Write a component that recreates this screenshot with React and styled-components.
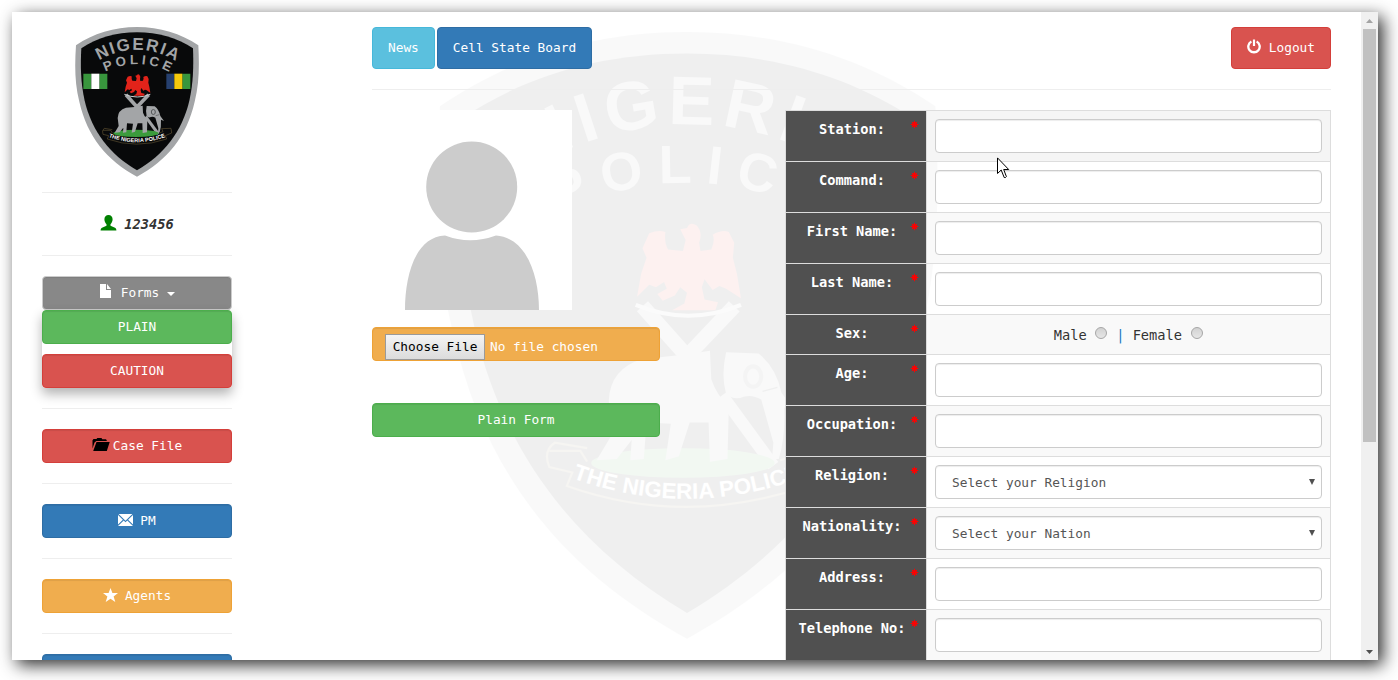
import React from "react";
import styled, { createGlobalStyle, css } from "styled-components";

const Global = createGlobalStyle`
  * { box-sizing: border-box; }
  body { margin: 0; background: #fff; overflow: hidden; }
`;

const tones = {
  green: ["#5cb85c", "#4cae4c"],
  red: ["#d9534f", "#d43f3a"],
  blue: ["#337ab7", "#2e6da4"],
  orange: ["#f0ad4e", "#eea236"],
  info: ["#5bc0de", "#46b8da"],
  grey: ["#888888", "#cccccc"],
};

const Page = styled.div`
  width: 1398px;
  height: 680px;
  padding: 12px 20px 20px 12px;
  overflow: hidden;
  font-family: "DejaVu Sans Mono", "Liberation Mono", monospace;
  font-size: 12.8px;
  line-height: 20px;
  color: #333;
`;

const Window = styled.div`
  position: relative;
  display: flex;
  width: 1366px;
  height: 648px;
  background: #fff;
  box-shadow: 5px 5px 16px rgba(0, 0, 0, 0.82);
`;

const Viewport = styled.div`
  position: relative;
  flex: 1;
  display: flex;
  align-items: flex-start;
  gap: 140px;
  height: 648px;
  padding: 15px 30px 0;
  overflow: hidden;
`;

const Watermark = styled.div`
  position: absolute;
  left: 424px;
  top: 20px;
  width: 502px;
  height: 608px;
  opacity: 0.06;
  svg { display: block; width: 100%; height: 100%; }
`;

const Sidebar = styled.aside`
  width: 190px;
  flex: none;
`;

const Logo = styled.div`
  height: 150px;
  margin-bottom: 15px;
  svg { display: block; width: 124px; height: 150px; margin: 0 auto; }
`;

const Rule = styled.hr`
  height: 1px;
  margin: ${(p) => (p.$flush ? "0" : "20px 0")};
  border: 0;
  background: #eee;
`;

const User = styled.div`
  display: flex;
  align-items: center;
  justify-content: center;
  gap: 7px;
  height: 62px;
  font-size: 13.7px;
  font-weight: bold;
  font-style: italic;
  svg { margin-top: -2px; }
`;

const Button = styled.button`
  display: flex;
  align-items: center;
  justify-content: center;
  gap: ${(p) => p.$gap ?? 8}px;
  width: ${(p) => (p.$auto ? "auto" : "100%")};
  height: ${(p) => (p.$tall ? 42 : 34)}px;
  padding: 0 ${(p) => (p.$auto ? 15 : 12)}px;
  border: 1px solid ${(p) => tones[p.$tone][1]};
  border-radius: 4px;
  background: ${(p) => tones[p.$tone][0]};
  color: #fff;
  font: inherit;
  white-space: nowrap;
  ${(p) => !p.$auto && css`box-shadow: inset 0 1px 1px rgba(0, 0, 0, 0.075);`}
  svg { display: block; flex: none; margin-top: -3px; }
`;

const Menu = styled.div`
  display: flex;
  flex-direction: column;
  gap: 10px;
  background: #fff;
  border-radius: 4px;
  box-shadow: 0 6px 12px rgba(0, 0, 0, 0.3);
`;

const Caret = styled.span`
  border: 4px solid transparent;
  border-top-color: #fff;
  border-bottom: 0;
  margin-top: 2px;
`;

const Stack = styled.div`
  padding-top: 20px;
`;

const Main = styled.main`
  position: relative;
  width: 959px;
  flex: none;
`;

const Nav = styled.nav`
  display: flex;
  gap: 2px;
  > :last-child { margin-left: auto; }
`;

const Columns = styled.div`
  display: flex;
  justify-content: space-between;
  align-items: flex-start;
`;

const Upload = styled.section`
  width: 288px;
`;

const Avatar = styled.div`
  width: 200px;
  height: 200px;
  margin-bottom: 17px;
  background: #fff;
  svg { display: block; }
`;

const FileField = styled.div`
  display: flex;
  align-items: flex-start;
  gap: 5px;
  height: 34px;
  margin-bottom: 42px;
  padding: 6px 12px;
  border: 1px solid ${tones.orange[1]};
  border-radius: 4px;
  background: ${tones.orange[0]};
  box-shadow: inset 0 1px 1px rgba(0, 0, 0, 0.075);
  color: #fff;
  line-height: 25px;
`;

const FileButton = styled.span`
  width: 100px;
  height: 26px;
  border: 1px solid #9a9a9a;
  background: linear-gradient(#f4f4f4, #dcdcdc);
  color: #000;
  text-align: center;
  line-height: 24px;
`;

const Form = styled.form`
  width: 546px;
  border: 1px solid #ddd;
`;

const Row = styled.div`
  display: flex;
  height: ${(p) => (p.$short ? 40 : 51)}px;
  border-bottom: 1px solid #ddd;
  background: ${(p) => p.$bg};
`;

const Label = styled.label`
  display: flex;
  width: 141px;
  padding: 8px 7px 8px 9px;
  border-right: 1px solid #ddd;
  background: #505050;
  color: #fff;
  font-size: 13.7px;
  font-weight: bold;
  white-space: nowrap;
  span { flex: 1; display: flex; justify-content: center; min-width: 0; }
  svg { flex: none; margin: 1px 0 0 1px; }
`;

const Cell = styled.div`
  flex: 1;
  display: flex;
  padding: 8px;
`;

const field = css`
  width: 100%;
  height: 34px;
  border: 1px solid #ccc;
  border-radius: 4px;
  background: #fff;
  box-shadow: inset 0 1px 1px rgba(0, 0, 0, 0.075);
`;

const Input = styled.input`
  ${field}
  padding: 6px 12px;
  font: inherit;
`;

const Select = styled.div`
  ${field}
  display: flex;
  align-items: center;
  justify-content: space-between;
  padding: 1px 6px 0 16px;
  color: #555;
  svg { display: block; margin-top: -2px; }
`;

const Choices = styled.div`
  flex: 1;
  display: flex;
  justify-content: center;
  align-items: center;
  gap: 8.25px;
  font-size: 13.7px;
`;

const Bar = styled.span`
  color: #1778c2;
`;

const Radio = styled.span`
  width: 12px;
  height: 12px;
  margin: -3px 0.5px 0;
  border: 1px solid #a6a6a6;
  border-radius: 50%;
  background: linear-gradient(#d2d2d2, #e6e6e6);
`;

const Scrollbar = styled.div`
  display: flex;
  flex-direction: column;
  align-items: center;
  justify-content: space-between;
  width: 17px;
  background: #f0f0f0;
`;

const Arrow = styled.div`
  display: grid;
  place-items: center;
  height: 17px;
`;

const Thumb = styled.div`
  width: 13px;
  height: 413px;
  margin-bottom: auto;
  background: #c1c1c1;
`;

const Pointer = styled.svg`
  position: absolute;
  left: 985px;
  top: 145px;
`;

function Crest({ id }) {
  return (
    <svg viewBox="45 36 372 450" preserveAspectRatio="none" fontFamily='"Liberation Sans", Arial, sans-serif' fontWeight="bold">
      <defs>
        <path id={`${id}-top`} d="M105 145 A216 216 0 0 1 357 145" />
        <path id={`${id}-mid`} d="M120 179 A212 212 0 0 1 342 179" />
        <path id={`${id}-rib`} d="M140 364 Q230 399 322 364" />
      </defs>
      <path d="M231 36 C162 36 100 55 48 91 C44 150 44 205 58 260 C82 365 140 435 231 485 C322 435 380 365 404 260 C418 205 418 150 415 91 C362 55 300 36 231 36Z" fill="#a3a5a7" />
      <path d="M231 52 C168 52 112 68 64 100 C61 152 62 205 74 257 C96 350 150 418 231 466 C312 418 366 350 388 257 C400 205 401 152 399 100 C350 68 294 52 231 52Z" fill="#08090a" />
      <text fill="#a3a5a7" fontSize="51" letterSpacing="5" textAnchor="middle">
        <textPath href={`#${id}-top`} startOffset="51.5%">NIGERIA</textPath>
      </text>
      <text fill="#a3a5a7" fontSize="40" letterSpacing="10" textAnchor="middle">
        <textPath href={`#${id}-mid`} startOffset="52.5%">POLICE</textPath>
      </text>
      <path d="M70 176h24v46H70zM118 176h24v46h-24zM367 176h24v46h-24z" fill="#38963d" />
      <path d="M94 176h24v46H94z" fill="#fff" />
      <path d="M319 176h24v46h-24z" fill="#26406f" />
      <path d="M343 176h24v46h-24z" fill="#f5c90c" />
      <g fill="none" stroke="#a3a5a7" strokeWidth="11">
        <path d="M198 239 L231 276" />
        <path d="M266 239 L231 276" />
        <path d="M257 305 L295 357" strokeWidth="9" />
      </g>
      <path d="M193 238 Q232 254 271 238" fill="none" stroke="#c8cacb" strokeWidth="3" />
      <path d="M228 186 L226 182 L231 181 Q233 176 238 179 Q243 184 240 192 L241 198 L249 197 Q252 190 250 186 Q257 182 262 184 L266 192 L265 203 L268 215 L271 233 L266 230 L260 226 L255 224 L250 227 L244 219 L242 225 L244 234 L254 236 L252 242 L220 242 L229 237 L231 229 L226 225 L222 231 L213 235 L209 230 L216 226 L214 221 L208 225 L203 223 L194 232 L197 215 L201 203 L198 196 L203 185 Q210 182 215 184 Q214 192 217 197 L228 198 L230 190 Z" fill="#e2231a" />
      <ellipse cx="228" cy="355" rx="68" ry="11" fill="#3b9b3c" />
      <path d="M173 309 Q174 285 198 278 Q224 276 248 272 L249 293 Q253 305 262 313 L261 352 L248 354 L247 325 L233 325 L225 350 L215 353 L219 326 L201 325 L199 352 L189 353 L190 338 L179 352 L164 353 L176 333Z" fill="#a3a5a7" />
      <path d="M260 273 L284 274 Q297 284 301 303 L312 318 L303 314 Q304 336 299 352 L294 352 L295 340 L286 308 Q279 304 273 306 Q266 309 260 304 Q256 290 260 273Z" fill="#a3a5a7" />
      <ellipse cx="280" cy="291" rx="6" ry="7.500" fill="none" stroke="#55585a" strokeWidth="3" />
      <path d="M287 302 L298 299" fill="none" stroke="#08090a" strokeWidth="1" />
      <g fill="none" stroke="#72613a" strokeWidth="1.600">
        <path d="M157 344 L133 340 Q124 346 129 358 L146 362 L142 372 Q230 403 320 372 L316 362 L335 354 L333 340 L305 341 L309 350 L300 353" />
        <path d="M129 346 L152 346 L157 354" />
      </g>
      <text fill="#fff" fontSize="16.500" letterSpacing="0.100" textAnchor="middle">
        <textPath href={`#${id}-rib`} startOffset="50%">THE NIGERIA POLICE</textPath>
      </text>
    </svg>
  );
}

const PersonIcon = () => (
  <svg width="17" height="16" viewBox="0 0 17 16" fill="#008000">
    <path d="M8.5 0C6 0 4.400 1.700 4.400 4.300c0 2 .9 4 2.100 4.900v1.600L2 12.700C.9 13.300.6 14.400.6 15.500h15.800c0-1.100-.3-2.200-1.400-2.800l-4.500-1.900V9.200c1.200-.9 2.100-2.900 2.100-4.900C12.600 1.700 11 0 8.500 0z" />
  </svg>
);
const FileIcon = () => (
  <svg width="14" height="15" viewBox="0 0 14 15" fill="#fff">
    <path d="M1 0h6v6h5v8H1zM8 0l4 5H8z" />
  </svg>
);
const FolderIcon = () => (
  <svg width="18" height="14" viewBox="0 0 18 14" fill="#000">
    <path d="M.5 10.500V2.200L1.500 1h3l.8-1h4.200l.8 1.200h3.700l.8 1.300v.6H4.300L2.500 4.500zM4.500 4H17.700L14.800 13H1.200z" />
  </svg>
);
const MailIcon = () => (
  <svg width="15" height="12" viewBox="0 0 15 12" fill="#fff">
    <path d="M.6 0h13.800L7.500 6.700zM0 .9l4.900 4.800L0 10.500zM15 .9v9.600l-4.900-4.800zM5.700 6.500l1.800 1.700 1.800-1.700L15 12H0z" />
  </svg>
);
const StarIcon = () => (
  <svg width="15" height="14" viewBox="0 0 15 14" fill="#fff">
    <path d="M7.500 0l1.900 4.900 5.600.1-4.400 3.400 1.700 5.600-4.800-3.300L2.700 14l1.700-5.600L0 5l5.600-.1z" />
  </svg>
);
const PowerIcon = () => (
  <svg width="14" height="15" viewBox="0 0 14 15" fill="none" stroke="#fff">
    <path d="M4.400 2.500a5.700 5.700 0 1 0 5.200 0" strokeWidth="2.300" />
    <path d="M7 .5v6.500" strokeWidth="2.200" />
  </svg>
);
const Required = () => (
  <svg width="9" height="9" viewBox="0 0 9 9">
    <circle cx="4.500" cy="4.500" r="2.400" fill="#f00" />
    <path d="M4.500 .8v7.400M.8 4.500h7.400M1.900 1.900l5.200 5.200M1.900 7.100l5.200-5.200" stroke="#f00" strokeWidth="1" />
  </svg>
);
const Triangle = ({ up, w = 7, h = 4, fill = "#505050" }) => (
  <svg width={w} height={h} viewBox="0 0 6 6" preserveAspectRatio="none" fill={fill}>
    <path d={up ? "M0 6h6L3 0z" : "M0 0h6L3 6z"} />
  </svg>
);

const rows = [
  { label: "Station:", bg: "#f5f5f5" },
  { label: "Command:" },
  { label: "First Name:", bg: "#f9f9f9" },
  { label: "Last Name:" },
  { label: "Sex:", bg: "#f9f9f9", kind: "radio" },
  { label: "Age:" },
  { label: "Occupation:", bg: "#f9f9f9" },
  { label: "Religion:", kind: "select", value: "Select your Religion" },
  { label: "Nationality:", bg: "#f9f9f9", kind: "select", value: "Select your Nation" },
  { label: "Address:" },
  { label: "Telephone No:", bg: "#f9f9f9" },
];

function Control({ kind, value }) {
  if (kind === "radio")
    return (
      <Choices>
        <span>Male</span><Radio /><Bar>|</Bar><span>Female</span><Radio />
      </Choices>
    );
  if (kind === "select")
    return (
      <Select>
        {value}
        <Triangle w={6} h={6} />
      </Select>
    );
  return <Input />;
}

export default function App() {
  return (
    <Page>
      <Global />
      <Window>
        <Viewport>
          <Watermark><Crest id="large" /></Watermark>
          <Sidebar>
            <Logo><Crest id="small" /></Logo>
            <Rule $flush />
            <User><PersonIcon />123456</User>
            <Rule $flush />
            <Stack>
              <Button $tone="grey"><FileIcon />Forms<Caret /></Button>
              <Menu>
                <Button $tone="green">PLAIN</Button>
                <Button $tone="red">CAUTION</Button>
              </Menu>
            </Stack>
            <Rule />
            <Button $tone="red" $gap={3}><FolderIcon />Case File</Button>
            <Rule />
            <Button $tone="blue" $gap={7}><MailIcon />PM</Button>
            <Rule />
            <Button $tone="orange" $gap={7}><StarIcon />Agents</Button>
            <Rule />
            <Button $tone="blue" />
          </Sidebar>
          <Main>
            <Nav>
              <Button $tone="info" $auto $tall>News</Button>
              <Button $tone="blue" $auto $tall>Cell State Board</Button>
              <Button $tone="red" $auto $tall><PowerIcon />Logout</Button>
            </Nav>
            <Rule />
            <Columns>
              <Upload>
                <Avatar>
                  <svg width="200" height="200" fill="#ccc">
                    <circle cx="99.700" cy="77" r="45.500" />
                    <path d="M33 200C33 166 43 127 73 125.500Q98 135 124 125.500C155 128 167 166 167 200Z" />
                  </svg>
                </Avatar>
                <FileField>
                  <FileButton>Choose File</FileButton>No file chosen
                </FileField>
                <Button $tone="green">Plain Form</Button>
              </Upload>
              <Form>
                {rows.map((r) => (
                  <Row key={r.label} $bg={r.bg || "transparent"} $short={r.kind === "radio"}>
                    <Label><span>{r.label}</span><Required /></Label>
                    <Cell><Control kind={r.kind} value={r.value} /></Cell>
                  </Row>
                ))}
              </Form>
            </Columns>
          </Main>
        </Viewport>
        <Scrollbar>
          <Arrow><Triangle up fill="#a3a3a3" /></Arrow>
          <Thumb />
          <Arrow><Triangle /></Arrow>
        </Scrollbar>
        <Pointer width="13" height="22" viewBox="0 0 13 22">
          <path d="M.5 .9V16.500L4.200 13l3 7.500q1.400.6 2.200-.9L6.700 12.500h5z" fill="#fff" stroke="#000" />
        </Pointer>
      </Window>
    </Page>
  );
}
